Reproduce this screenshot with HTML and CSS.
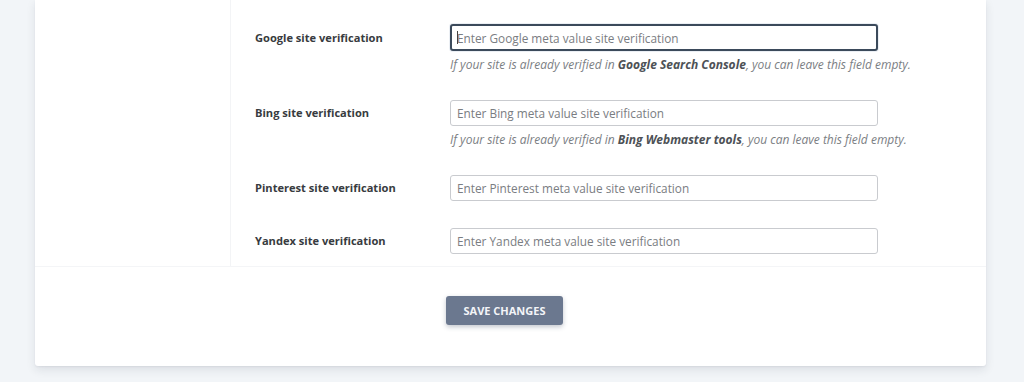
FILE: index.html
```html
<!DOCTYPE html>
<html lang="en">
<head>
<meta charset="utf-8">
<title>Site verification</title>
<link rel="stylesheet" href="styles.css">
</head>
<body>
<div class="page">
  <div class="card">
    <div class="card-body">
      <aside class="sidebar"></aside>
      <form class="form">
        <div class="row">
          <label class="label" for="g">Google site verification</label>
          <div class="field">
            <input class="input focused" id="g" type="text" placeholder="Enter Google meta value site verification">
            <span class="caret"></span>
          </div>
          <p class="help">If your site is already verified in <b>Google Search Console</b>, you can leave this field empty.</p>
        </div>
        <div class="row">
          <label class="label" for="b">Bing site verification</label>
          <div class="field">
            <input class="input" id="b" type="text" placeholder="Enter Bing meta value site verification">
          </div>
          <p class="help">If your site is already verified in <b>Bing Webmaster tools</b>, you can leave this field empty.</p>
        </div>
        <div class="row">
          <label class="label" for="p">Pinterest site verification</label>
          <div class="field">
            <input class="input" id="p" type="text" placeholder="Enter Pinterest meta value site verification">
          </div>
        </div>
        <div class="row">
          <label class="label" for="y">Yandex site verification</label>
          <div class="field">
            <input class="input" id="y" type="text" placeholder="Enter Yandex meta value site verification">
          </div>
        </div>
      </form>
    </div>
    <div class="card-footer">
      <button class="save" type="button">Save Changes</button>
    </div>
  </div>
</div>
</body>
</html>
```

FILE: styles.css
```css
* { box-sizing: border-box; }
html, body { margin: 0; padding: 0; }
body {
  background: #f2f5f8;
  font-family: "Open Sans", "Noto Sans", sans-serif;
  color: #3a3d42;
  height: 382px;
  overflow: hidden;
}
.page {
  padding: 0 38px 16px 35px;
}
.card {
  width: 951px;
  background: #ffffff;
  box-shadow: 0 4px 10px rgba(30, 40, 60, 0.10), 0 1px 2px rgba(30, 40, 60, 0.06);
  border-radius: 0 0 3px 3px;
}
.card-body {
  display: flex;
  border-bottom: 1px solid #f4f5f7;
}
.sidebar {
  width: 196px;
  flex: none;
  border-right: 1px solid #f3f4f6;
}
.form {
  margin: 0;
  padding: 11px 0 0 24px;
  flex: 1;
}
.row {
  display: grid;
  grid-template-columns: 195px 428px;
  padding: 13px 0;
}
.row:nth-child(3) { padding-bottom: 14px; }
.row:last-child { padding-bottom: 12px; }
.label {
  grid-column: 1;
  grid-row: 1;
  align-self: center;
  font-size: 11.1px;
  font-weight: 700;
  line-height: 26px;
  color: #383b40;
}
.field {
  grid-column: 2;
  grid-row: 1;
  position: relative;
}
.input {
  display: block;
  width: 428px;
  height: 26px;
  border: 1px solid #c9cbcf;
  border-radius: 3px;
  padding: 0 6px;
  font-family: inherit;
  font-size: 11.8px;
  color: #333;
  background: #fff;
  outline: none;
}
.input::placeholder { color: #7a7d82; }
.input.focused {
  height: 27px;
  border: 2px solid #3b4a5b;
  box-shadow: 0 0 0 1px rgba(120, 150, 180, 0.15);
  padding: 0 5px;
}
.caret {
  position: absolute;
  left: 7px;
  top: 7px;
  width: 1px;
  height: 13px;
  background: #444;
}
.help {
  grid-column: 2;
  grid-row: 2;
  margin: 5px 0 0;
  font-size: 12px;
  font-style: italic;
  line-height: 18px;
  color: #7b7e83;
  white-space: nowrap;
}
.help b {
  font-weight: 700;
  color: #4d5156;
}
.card-footer {
  padding: 29px 0 41px 411px;
}
.save {
  display: block;
  width: 117px;
  height: 29px;
  border: 0;
  border-radius: 3px;
  background: #6b788f;
  color: #f3f5f8;
  font-family: inherit;
  font-size: 11px;
  font-weight: 700;
  text-transform: uppercase;
  box-shadow: 0 2px 5px rgba(40, 55, 80, 0.28);
  cursor: pointer;
}
```
